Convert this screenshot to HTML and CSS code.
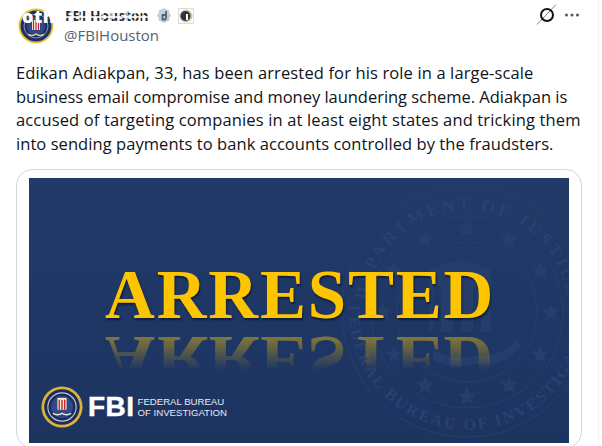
FILE: index.html
```html
<!DOCTYPE html>
<html lang="en">
<head>
<meta charset="utf-8">
<title>FBI Houston</title>
<link rel="stylesheet" href="styles.css">
</head>
<body>
<main class="tweet">
  <header class="head">
    <div class="avatar">
      <svg width="36" height="36" viewBox="0 0 36 36">
        <circle cx="18" cy="18" r="17.500" fill="#e3c63c"/>
        <circle cx="18" cy="18" r="15.500" fill="#1d2f66"/>
        <circle cx="18" cy="18" r="12" fill="none" stroke="#8d93a8" stroke-width="1"/>
        <circle cx="18" cy="18" r="9" fill="#2d4a86"/>
        <rect x="14" y="12" width="8" height="10" fill="#f4f0e4"/>
        <path d="M15.500 12v10M18 12v10M20.500 12v10" stroke="#c8202c" stroke-width="1.200"/>
        <path d="M10 26q4 3 8 0q4 3 8 0" stroke="#e8dc9a" stroke-width="1.400" fill="none"/>
      </svg>
      <span class="avatar-word">oth</span>
    </div>
    <div class="who">
      <div class="name-row">
        <span class="name">FBI Houston</span>
        <svg class="badge" width="14" height="17" viewBox="0 0 14 17"><path d="M7 1l2.500 1.500 2.500.5.500 3L14 8.500l-1.500 2.500-.5 3-2.500.5L7 16l-2.500-1.500-2.500-.5-.5-3L0 8.500 1.500 6l.5-3 2.500-.5z" fill="#c3d2da"/><path d="M9 4v8.500M9 8H5.500v4.500H9" stroke="#4c6674" stroke-width="1.800" fill="none"/></svg>
        <span class="seal-chip"><svg width="14" height="14" viewBox="0 0 14 14"><circle cx="7" cy="7" r="6.500" fill="#d8c98e"/><circle cx="6.500" cy="7" r="5" fill="#25364f"/><rect x="7" y="5" width="2" height="6" fill="#fff"/></svg></span>
      </div>
      <div class="handle">@FBIHouston</div>
    </div>
    <div class="actions">
      <svg width="22" height="22" viewBox="0 0 22 22"><path d="M20 0.500L1 20.500" stroke="#7b858d" stroke-width="1"/><circle cx="11" cy="11" r="6" fill="none" stroke="#0f1419" stroke-width="2"/></svg>
      <svg width="16" height="6" viewBox="0 0 16 6"><circle cx="2.500" cy="3" r="1.600" fill="#536471"/><circle cx="8" cy="3" r="1.600" fill="#536471"/><circle cx="13.500" cy="3" r="1.600" fill="#536471"/></svg>
    </div>
  </header>
  <p class="body">
    <span class="line line-a">Edikan Adiakpan, 33, has been arrested for his role in a large-scale</span>
    <span class="line line-b">business email compromise and money laundering scheme. Adiakpan is</span>
    <span class="line line-c">accused of targeting companies in at least eight states and tricking them</span>
    <span class="line line-d">into sending payments to bank accounts controlled by the fraudsters.</span>
  </p>
  <section class="card">
    <div class="poster">
      <svg class="watermark" width="260" height="260" viewBox="0 0 260 260">
        <defs>
          <path id="ring-top" d="M34 160a101 101 0 1 1 192 0"/>
          <path id="ring-bot" d="M14 108a118 118 0 1 0 232 0"/>
          <path id="star" d="M0-9l2.600 6.200 6.700.5-5.100 4.400 1.600 6.500L0 5.100l-5.800 3.500 1.600-6.500-5.100-4.400 6.700-.5z"/>
        </defs>
        <g fill="none" stroke="#273f6d">
          <circle cx="130" cy="130" r="125"/>
          <circle cx="130" cy="130" r="96"/>
          <circle cx="130" cy="130" r="70"/>
        </g>
        <g class="wm-text">
          <text class="wm-top"><textPath href="#ring-top" startOffset="50%" text-anchor="middle">DEPARTMENT OF JUSTICE</textPath></text>
          <text class="wm-bot"><textPath href="#ring-bot" startOffset="50%" text-anchor="middle">FEDERAL BUREAU OF INVESTIGATION</textPath></text>
        </g>
        <g class="wm-stars">
          <use href="#star" x="130" y="46"/><use href="#star" x="88" y="57"/><use href="#star" x="172" y="57"/>
          <use href="#star" x="203" y="88"/><use href="#star" x="214" y="130"/><use href="#star" x="203" y="172"/>
          <use href="#star" x="172" y="203"/><use href="#star" x="130" y="214"/><use href="#star" x="88" y="203"/>
          <use href="#star" x="57" y="172"/><use href="#star" x="46" y="130"/><use href="#star" x="57" y="88"/>
        </g>
        <path d="M92 88l31-12 31 12v62h-10v-46h-8v46h-12v-46h-8v46h-12v-46h-8v46h-4z" fill="#253d6b"/>
        <path d="M96 168q22 12 44 5q22 4 40-16l4 9q-20 20-44 16q-24 6-44-4z" fill="#253d6b"/>
      </svg>
      <div class="headline">
        <div class="word">ARRESTED</div>
        <div class="word reflection" aria-hidden="true">ARRESTED</div>
      </div>
      <div class="brand">
        <svg width="42" height="42" viewBox="0 0 46 46">
          <circle cx="23" cy="23" r="22.500" fill="#d9b63a"/>
          <circle cx="23" cy="23" r="19.500" fill="#1c2c5c"/>
          <circle cx="23" cy="23" r="15.500" fill="none" stroke="#c9cbd0" stroke-width="1.200"/>
          <circle cx="23" cy="23" r="12" fill="#2e4a8a"/>
          <rect x="18" y="13" width="10" height="13" fill="#f3ecd6"/>
          <path d="M20 15v11M23 15v11M26 15v11" stroke="#c8202c" stroke-width="1.500"/>
          <path d="M13 30q5 3 10 0q5 3 10 0" fill="none" stroke="#f0ead0" stroke-width="1.600"/>
        </svg>
        <span class="fbi">FBI</span>
        <span class="agency">FEDERAL BUREAU<br>OF INVESTIGATION</span>
      </div>
    </div>
  </section>
</main>
</body>
</html>
```

FILE: styles.css
```css
* { box-sizing: border-box; }
html, body { margin: 0; height: 100%; background: #fff; overflow: hidden; }
body { font-family: "Open Sans", "Noto Sans", sans-serif; color: #0f1419; }

.tweet {
  width: 599px;
  height: 446px;
  border-right: 1px solid #eff3f4;
  padding: 8px 0 0 16px;
  overflow: hidden;
}

.head { display: flex; align-items: flex-start; height: 36px; }
.avatar { position: relative; width: 36px; height: 36px; margin-left: 2px; flex: none; }
.avatar svg { display: block; }
.avatar-word {
  position: absolute; left: 4px; top: 0;
  color: #fff; font: 800 18px/16px "Open Sans", sans-serif;
  letter-spacing: .5px;
}

.who { margin-left: 10px; flex: 1; }
.name-row { display: flex; align-items: center; height: 15px; }
.name {
  position: relative;
  width: 90px;
  padding-left: 1px;
  font-size: 13.800px;
  font-weight: 700;
  line-height: 15px;
  white-space: nowrap;
  color: #2a2f33;
}
.name::after {
  content: "";
  position: absolute;
  inset: 0;
  background:
    linear-gradient(180deg, transparent 0 52%, rgba(255, 255, 255, .8) 52% 68%, transparent 68%),
    repeating-linear-gradient(90deg, transparent 0 6px, rgba(255, 255, 255, .6) 6px 8px);
}
.badge { margin-left: 3px; flex: none; }
.seal-chip {
  display: flex; width: 16px; height: 16px; margin-left: 7px; flex: none;
  border: 1px solid #d6dde1; align-items: center; justify-content: center; overflow: hidden;
}
.seal-chip svg { display: block; }
.handle { margin-top: 2px; font-size: 15px; line-height: 20px; color: #536471; }

.actions { display: flex; align-items: center; gap: 6px; margin: -4px 18px 0 0; }

.body {
  margin: 17px 0 0;
  font-size: 16.500px;
  line-height: 23.700px;
  white-space: nowrap;
}
.line { display: block; }
.line-a { letter-spacing: .13px; }
.line-b { letter-spacing: -.03px; }
.line-c { letter-spacing: .14px; }
.line-d { letter-spacing: .06px; }

.card {
  width: 566px;
  height: 279px;
  margin-top: 13px;
  border: 1px solid #cfd9de;
  border-radius: 16px;
  padding: 8px 12px 0;
}

.poster {
  position: relative;
  width: 540px;
  height: 265px;
  background: linear-gradient(180deg, #223a68 0%, #1f3765 50%, #1d3461 100%);
  overflow: hidden;
  display: flex;
  flex-direction: column;
}

.watermark { position: absolute; left: 308px; top: 4px; }
.wm-text { fill: #294170; font-family: "Liberation Serif", serif; font-weight: 700; }
.wm-top { font-size: 17px; letter-spacing: 3.500px; }
.wm-bot { font-size: 16px; letter-spacing: 2.500px; }
.wm-stars { fill: #263e6c; }

.headline { position: relative; margin: 89px 0 0 76px; }
.word {
  font: 700 69px/56px "Liberation Serif", serif;
  letter-spacing: 1.800px;
  color: #fdc500;
  white-space: nowrap;
  text-shadow: 1px 2px 2px rgba(8, 18, 44, .7);
}
.reflection {
  margin-top: 9px;
  height: 56px;
  overflow: hidden;
  text-shadow: none;
  transform: scaleY(-1);
  opacity: .45;
  -webkit-mask-image: linear-gradient(to top, #000 5px, transparent 38px);
  mask-image: linear-gradient(to top, #000 5px, transparent 38px);
}

.brand { position: absolute; left: 12px; bottom: 15px; display: flex; align-items: center; color: #fff; }
.brand svg { display: block; }
.fbi { margin-left: 5px; font: 900 28px/28px "Liberation Sans", sans-serif; -webkit-text-stroke: .5px #fff; letter-spacing: .5px; }
.agency { margin-left: 3px; font: 400 9.600px/11px "Liberation Sans", sans-serif; color: #e8ecf2; }
```
